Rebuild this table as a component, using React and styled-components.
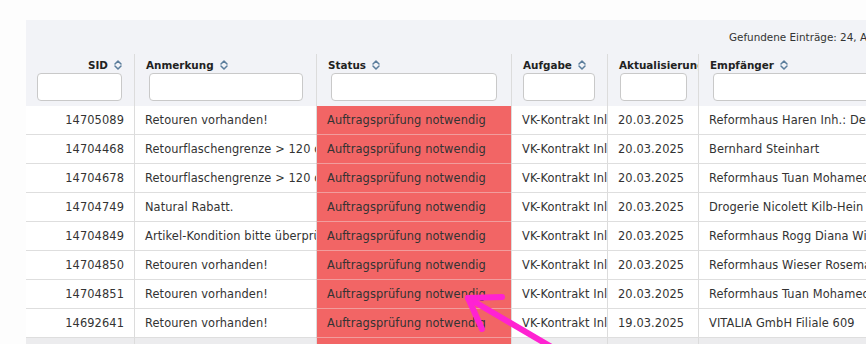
import styled, { createGlobalStyle } from "styled-components";

const GlobalStyle = createGlobalStyle`
    html, body {
        margin: 0;
        padding: 0;
        background: #fdfdfd;
        overflow: hidden;
    }
    body {
        font-family: "DejaVu Sans", Verdana, sans-serif;
        color: #333;
    }
`;

const Page = styled.div`
    position: relative;
    width: 866px;
    height: 344px;
    overflow: hidden;
    padding-top: 20px;
    padding-left: 26px;
    box-sizing: border-box;
`;

const Panel = styled.div`
    width: 1100px;
    background: #f2f3f7;
`;

const InfoBar = styled.div`
    height: 34px;
    display: flex;
    align-items: center;
    padding-left: 703px;
    font-size: 10.4px;
    color: #333;
    white-space: nowrap;
`;

const Table = styled.table`
    border-collapse: separate;
    border-spacing: 0;
    table-layout: fixed;
    width: ${props => props.width}px;
`;

const HeadCell = styled.th`
    vertical-align: top;
    text-align: ${props => (props.align === "right" ? "right" : "left")};
    padding: 0 12px 5px 11px;
    border-left: ${props => (props.first ? "none" : "1px solid #dcdcdc")};
    overflow: hidden;
    white-space: nowrap;
    font-size: 10.4px;
    font-weight: bold;
    color: #222;
`;

const Label = styled.div`
    height: 19px;
    display: flex;
    align-items: center;
    justify-content: ${props => (props.align === "right" ? "flex-end" : "flex-start")};
    gap: 6px;
    padding-top: 2px;
    box-sizing: border-box;
`;

const FilterInput = styled.input`
    display: block;
    box-sizing: border-box;
    width: calc(100% + ${props => props.grow || 0}px);
    height: 28px;
    margin-left: ${props => props.shift || 0}px;
    border: 1px solid #c9c9c9;
    border-radius: 4px;
    background: #fff;
`;

const Row = styled.tr`
    background: ${props => (props.muted ? "#ececee" : "#fff")};
`;

const Cell = styled.td`
    box-sizing: border-box;
    height: 29px;
    padding: 1px 10px 0;
    line-height: 27px;
    font-size: 11.4px;
    letter-spacing: 0.1px;
    color: #333;
    white-space: nowrap;
    overflow: hidden;
    text-align: ${props => (props.align === "right" ? "right" : "left")};
    border-left: ${props => (props.first ? "none" : "1px solid #dcdcdc")};
    border-bottom: 1px solid ${props => (props.alert ? "#f19d9d" : "#dedede")};
    background: ${props => (props.alert ? "#f26565" : "transparent")};
`;

const Overlay = styled.svg`
    position: absolute;
    left: 0;
    top: 0;
    pointer-events: none;
`;

function SortIcon() {
    return (
        <svg width="8" height="10" viewBox="0 0 8 10">
            <path d="M1 4 L4 1 L7 4 M1 6 L4 9 L7 6" fill="none" stroke="#5b7d9c" strokeWidth="1.5" strokeLinecap="round" strokeLinejoin="round" />
        </svg>
    );
}

const columns = [
    { key: "sid", title: "SID", width: 108, align: "right", sort: true },
    { key: "note", title: "Anmerkung", width: 182, sort: true, shift: 3, grow: -4 },
    { key: "status", title: "Status", width: 195, sort: true, shift: 3, grow: -5 },
    { key: "task", title: "Aufgabe", width: 96, sort: true },
    { key: "date", title: "Aktualisierung", width: 91, sort: false, shift: 1 },
    { key: "to", title: "Empfänger", width: 260, sort: true, shift: 3 },
    { key: "more", title: "Kunde", width: 160, sort: true },
];

const rows = [
    { sid: "14705089", note: "Retouren vorhanden!", date: "20.03.2025", to: "Reformhaus Haren Inh.: Detlef Meyer" },
    { sid: "14704468", note: "Retourflaschengrenze > 120 db", date: "20.03.2025", to: "Bernhard Steinhart" },
    { sid: "14704678", note: "Retourflaschengrenze > 120 db", date: "20.03.2025", to: "Reformhaus Tuan Mohamed" },
    { sid: "14704749", note: "Natural Rabatt.", date: "20.03.2025", to: "Drogerie Nicolett Kilb-Hein" },
    { sid: "14704849", note: "Artikel-Kondition bitte überprüfen", date: "20.03.2025", to: "Reformhaus Rogg Diana Wilhelm" },
    { sid: "14704850", note: "Retouren vorhanden!", date: "20.03.2025", to: "Reformhaus Wieser Rosemarie" },
    { sid: "14704851", note: "Retouren vorhanden!", date: "20.03.2025", to: "Reformhaus Tuan Mohamed" },
    { sid: "14692641", note: "Retouren vorhanden!", date: "19.03.2025", to: "VITALIA GmbH Filiale 609" },
    { sid: "14692580", note: "Retouren vorhanden!", date: "19.03.2025", to: "VITALIA GmbH Filiale 611", muted: true },
];

export default function App() {
    const tableWidth = columns.reduce((sum, c) => sum + c.width, 0);

    return (
        <Page>
            <GlobalStyle />
            <Panel>
                <InfoBar>Gefundene Einträge: 24, Anzeige 1 bis 24 von 24</InfoBar>
                <Table width={tableWidth}>
                    <colgroup>
                        {columns.map(c => (
                            <col key={c.key} style={{ width: c.width }} />
                        ))}
                    </colgroup>
                    <thead>
                        <tr>
                            {columns.map((c, i) => (
                                <HeadCell key={c.key} first={i === 0} align={c.align}>
                                    <Label align={c.align}>
                                        <span>{c.title}</span>
                                        {c.sort && <SortIcon />}
                                    </Label>
                                    <FilterInput type="text" shift={c.shift} grow={c.grow} />
                                </HeadCell>
                            ))}
                        </tr>
                    </thead>
                    <tbody>
                        {rows.map(r => (
                            <Row key={r.sid} muted={r.muted}>
                                <Cell first align="right">{r.sid}</Cell>
                                <Cell>{r.note}</Cell>
                                <Cell alert>Auftragsprüfung notwendig</Cell>
                                <Cell>VK-Kontrakt Inland</Cell>
                                <Cell>{r.date}</Cell>
                                <Cell>{r.to}</Cell>
                                <Cell>Standard</Cell>
                            </Row>
                        ))}
                    </tbody>
                </Table>
            </Panel>

            <Overlay width="866" height="344" viewBox="0 0 866 344">
                <g fill="none" stroke="#ff22d2" strokeWidth="6" strokeLinecap="round">
                    <path d="M468 298 L560 352" />
                    <path d="M468 298 L502 297" />
                    <path d="M468 298 L482 329" />
                </g>
            </Overlay>
        </Page>
    );
}
